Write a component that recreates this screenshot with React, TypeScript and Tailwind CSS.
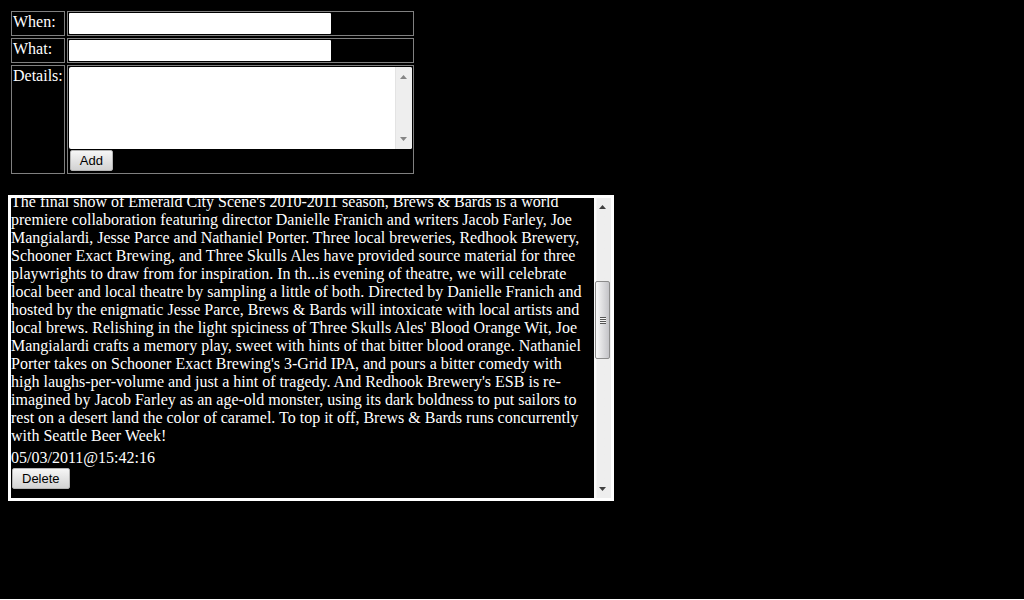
import React from "react";

const buttonClass =
  "m-px h-[21px] shrink-0 rounded-[2px] border border-[#b4b4b4] bg-linear-to-b from-[#f6f6f6] to-[#d2d2d2] px-[9px] font-['Liberation_Sans',Arial,sans-serif] text-[13px] leading-[18px] text-black";
const cellClass = "border border-[#808080] p-px align-top";
const inputClass =
  "block h-[21px] w-[262px] rounded-[1px] bg-white px-1 text-[13px] text-black outline-none";

function Arrow({ down, color }: { down?: boolean; color: string }) {
  return (
    <svg width="7" height="4" viewBox="0 0 7 4" fill={color} aria-hidden="true">
      <path d={down ? "M0 0H7L3.5 4Z" : "M3.5 0L7 4H0Z"} />
    </svg>
  );
}

export default function App() {
  return (
    <div className="bg-white">
      <main className="min-h-[calc(100vh-1px)] bg-black p-2 font-['Liberation_Serif','Times_New_Roman',serif] text-[16px] leading-[18px] text-white">
        <form onSubmit={(e) => e.preventDefault()}>
          <table className="border-separate border-spacing-[2px] border border-black">
            <tbody>
              <tr>
                <td className={cellClass}>
                  <label htmlFor="when">When:</label>
                </td>
                <td className={cellClass}>
                  <input id="when" type="text" className={inputClass} />
                </td>
              </tr>
              <tr>
                <td className={cellClass}>
                  <label htmlFor="what">What:</label>
                </td>
                <td className={cellClass}>
                  <input id="what" type="text" className={inputClass} />
                </td>
              </tr>
              <tr>
                <td className={cellClass}>
                  <label htmlFor="details">Details:</label>
                </td>
                <td className={cellClass}>
                  <div className="flex h-[82px] overflow-hidden rounded-[2px] bg-white">
                    <textarea
                      id="details"
                      className="block h-full w-[326px] resize-none overflow-hidden px-1 text-[13px] text-black outline-none"
                    />
                    <div className="flex w-[17px] flex-col items-center justify-between border-l border-[#e3e3e3] bg-[#eeeeee] py-2">
                      <Arrow color="#858585" />
                      <Arrow down color="#858585" />
                    </div>
                  </div>
                  <button type="submit" className={`${buttonClass} block`}>
                    Add
                  </button>
                </td>
              </tr>
            </tbody>
          </table>
        </form>

        <section className="mt-[18px] flex h-[306px] max-w-[606px] border-[3px] border-white">
          <div className="flex flex-1 flex-col justify-end overflow-hidden pb-2">
            <p className="mb-1 shrink-0">
              The final show of Emerald City Scene's 2010-2011 season, Brews &amp; Bards is a world
              premiere collaboration featuring director Danielle Franich and writers Jacob Farley, Joe
              Mangialardi, Jesse Parce and Nathaniel Porter. Three local breweries, Redhook Brewery,
              Schooner Exact Brewing, and Three Skulls Ales have provided source material for three
              playwrights to draw from for inspiration. In th...is evening of theatre, we will celebrate
              local beer and local theatre by sampling a little of both. Directed by Danielle Franich and
              hosted by the enigmatic Jesse Parce, Brews &amp; Bards will intoxicate with local artists and
              local brews. Relishing in the light spiciness of Three Skulls Ales' Blood Orange Wit, Joe
              Mangialardi crafts a memory play, sweet with hints of that bitter blood orange. Nathaniel
              Porter takes on Schooner Exact Brewing's 3-Grid IPA, and pours a bitter comedy with
              high laughs-per-volume and just a hint of tragedy. And Redhook Brewery's ESB is
              re-imagined by Jacob Farley as an age-old monster, using its dark boldness to put sailors to
              rest on a desert land the color of caramel. To top it off, Brews &amp; Bards runs concurrently
              with Seattle Beer Week!
            </p>
            <time className="shrink-0">05/03/2011@15:42:16</time>
            <button type="button" className={`${buttonClass} self-start`}>
              Delete
            </button>
          </div>
          <div className="flex w-[17px] shrink-0 flex-col items-center bg-linear-to-r from-[#fafafa] from-10% to-[#eeeeee] to-20% py-[7px]">
            <Arrow color="#404040" />
            <div className="grow-[72]" />
            <div className="flex h-[78px] w-[15px] flex-col items-center justify-center rounded-[2px] border border-[#8c8c8c] bg-linear-to-r from-[#f8f8f8] to-[#c4c4c8]">
              <span className="h-px w-[6px] bg-[#555555]" />
              <span className="h-px w-[6px] bg-[#f4f4f4]" />
              <span className="h-px w-[6px] bg-[#555555]" />
              <span className="h-px w-[6px] bg-[#f4f4f4]" />
              <span className="h-px w-[6px] bg-[#555555]" />
              <span className="h-px w-[6px] bg-[#f4f4f4]" />
              <span className="h-px w-[6px] bg-[#555555]" />
            </div>
            <div className="grow-[128]" />
            <Arrow down color="#404040" />
          </div>
        </section>
      </main>
    </div>
  );
}
